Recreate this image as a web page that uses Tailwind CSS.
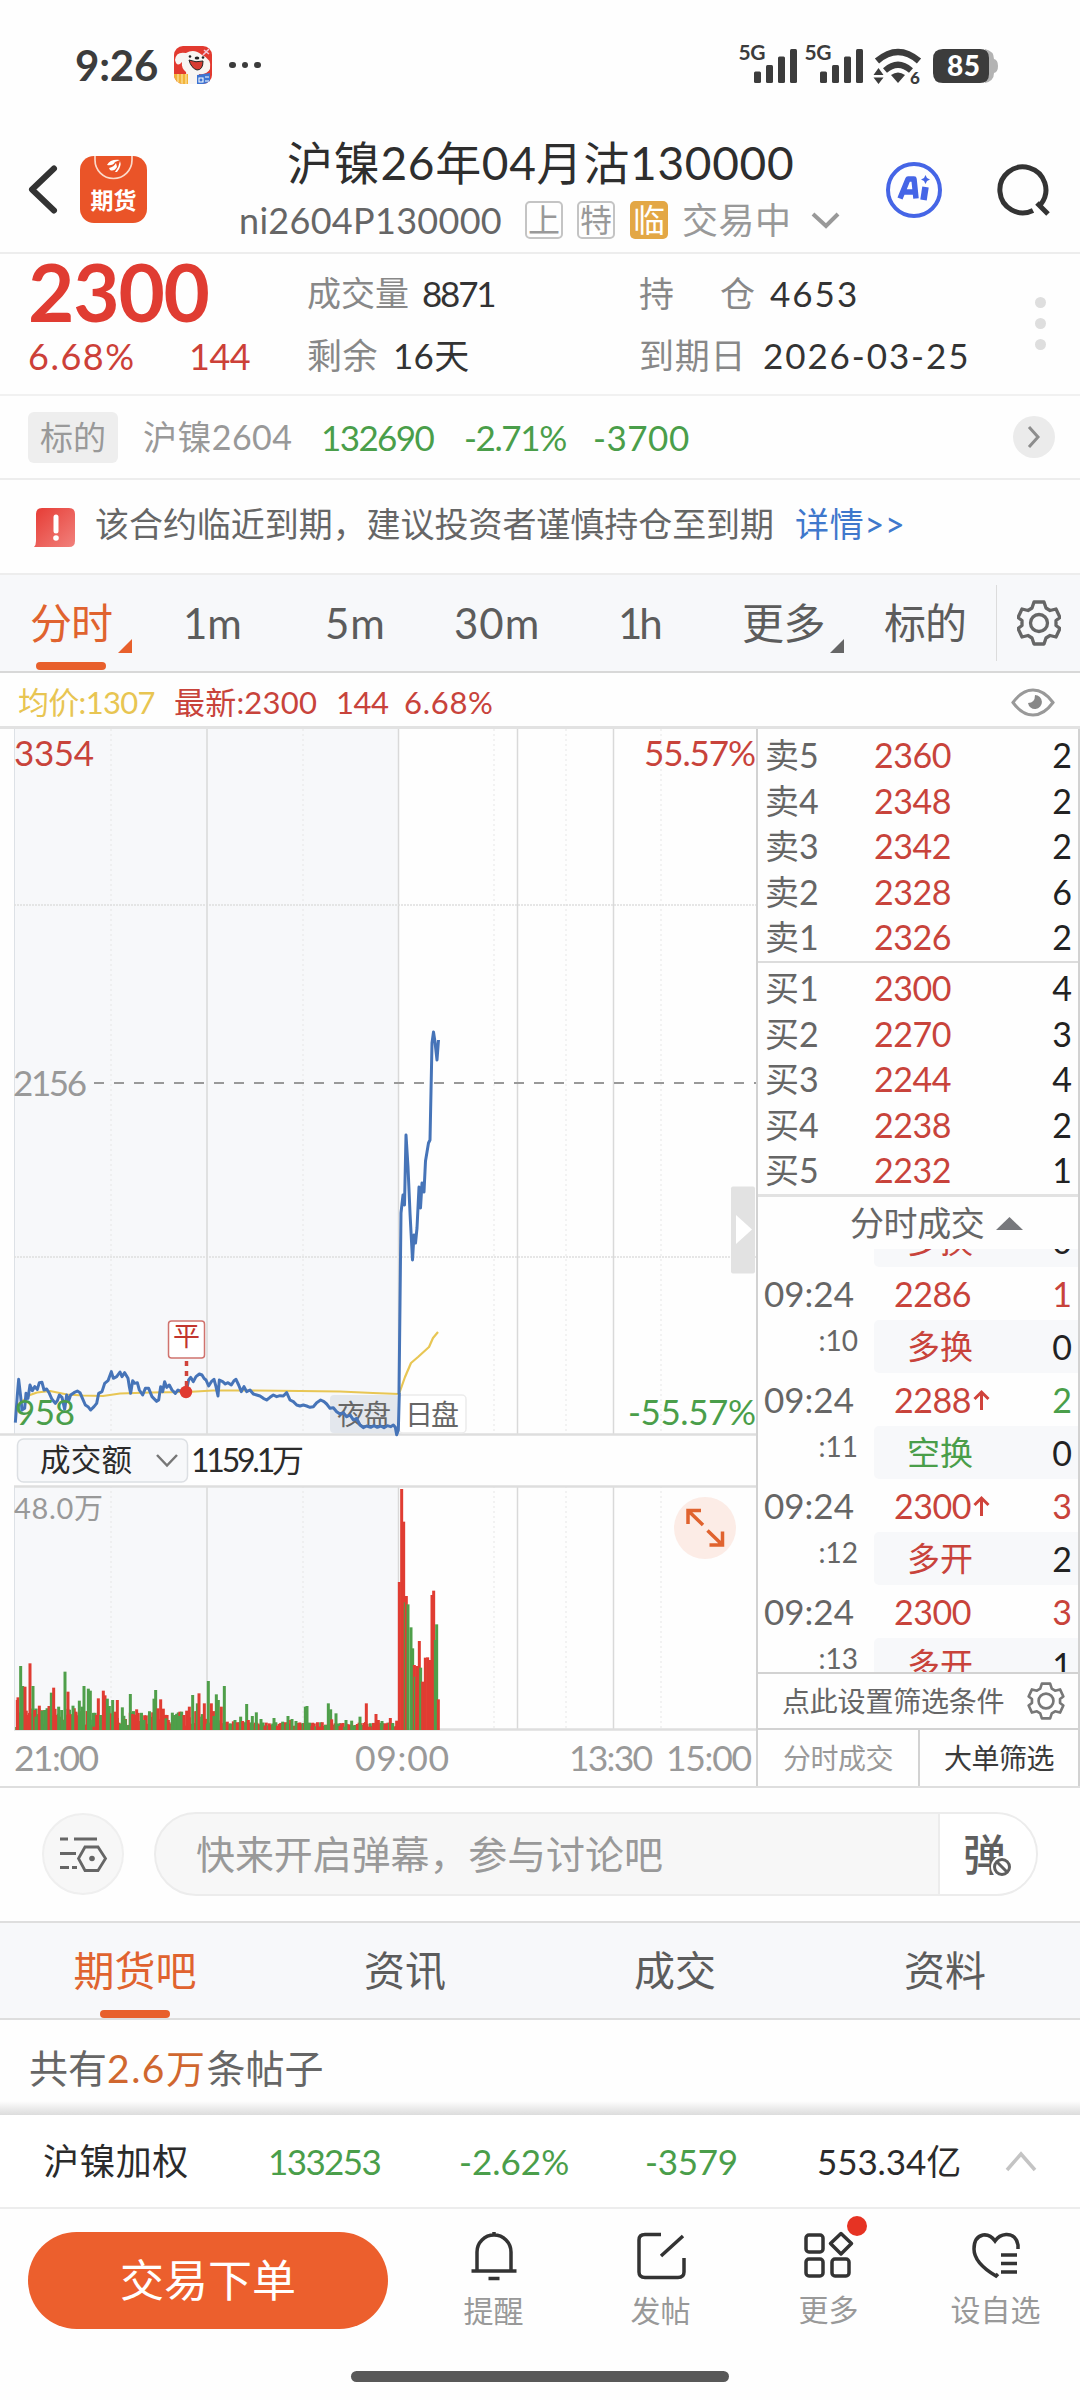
<!DOCTYPE html>
<html lang="zh-CN">
<head>
<meta charset="utf-8">
<title>沪镍26年04月沽130000</title>
<script src="https://cdn.jsdelivr.net/npm/@tailwindcss/browser@4"></script>
</head>
<body class="bg-white">
<div class="w-[1080px] h-[2400px] flex flex-col overflow-hidden bg-[#fefefe] font-[Lato,'Noto_Sans_CJK_SC',sans-serif] leading-none whitespace-nowrap text-[#333]">

  <!-- status bar -->
  <div class="h-[130px] shrink-0 flex items-center pl-[75px] pr-[80px]">
    <div class="w-[99px] text-[42px] font-bold tracking-[-0.200px] text-[#3c3c3c]">9:26</div>
    <svg class="w-[38px] h-[38px] shrink-0" viewBox="0 0 38 38">
      <clipPath id="mascot"><rect width="38" height="38" rx="9"/></clipPath>
      <g clip-path="url(#mascot)">
        <rect width="38" height="38" fill="#e23a30"/>
        <path d="M1 14Q2 5 12 7Q20 2 28 9Q38 13 36 23Q33 29 25 28L27 38H13L12 26Q7 22 8 16Q3 22 1 14Z" fill="#f8f5f3"/>
        <path d="M15 14Q22 17 29 15Q29 24 23 24Q17 22 15 14Z" fill="#d63c33" stroke="#222" stroke-width="1"/>
        <circle cx="16" cy="10.500" r="1.300" fill="#222"/><circle cx="29" cy="11.500" r="1.300" fill="#222"/><ellipse cx="23" cy="12" rx="2.300" ry="1.500" fill="#222"/>
        <path d="M29 9L35 3M30 4L35 8" stroke="#f1c5d6" stroke-width="1.600"/>
        <path d="M0 28H14V38H0Z" fill="#f2b43a"/><path d="M4 28V38M8 28V38M12 28V38" stroke="#fbdf9a" stroke-width="1.300"/>
        <path d="M23 29L36 27V38H23Z" fill="#3d74d3"/><path d="M25 32H29V36H25ZM31 31H35M31 35H35" stroke="#fff" stroke-width="1.100" fill="none"/>
      </g>
    </svg>
    <div class="flex gap-[6px] ml-[17px]"><i class="size-[6.5px] rounded-full bg-[#3c3c3c]"></i><i class="size-[6.5px] rounded-full bg-[#3c3c3c]"></i><i class="size-[6.5px] rounded-full bg-[#3c3c3c]"></i></div>
    <svg class="w-[262px] h-[56px] ml-auto" viewBox="738 36 262 56" fill="#3c3c3c">
      <g font-family="Lato" font-weight="700" font-size="21"><text x="738.500" y="59" textLength="27">5G</text><text x="804.500" y="59" textLength="27">5G</text></g>
      <g id="bars"><rect x="754" y="70.500" width="7" height="11.500" rx="1.500"/><rect x="766" y="64" width="7" height="18" rx="1.500"/><rect x="778" y="55.500" width="7" height="26.500" rx="1.500"/><rect x="790" y="48" width="7" height="34" rx="1.500"/></g>
      <use href="#bars" x="66"/>
      <path d="M877 60Q898 42 919 60" fill="none" stroke="#3c3c3c" stroke-width="6.500"/>
      <path d="M885 69.500Q898 58 911 69.500" fill="none" stroke="#3c3c3c" stroke-width="6"/>
      <path d="M891 74Q898 69 905 74L898 82Z"/>
      <path d="M873.500 74L878.500 67L883.500 74ZM873.500 76.500H883.500L878.500 83Z"/>
      <text x="910" y="83" font-family="Lato" font-weight="900" font-size="17">6</text>
      <path d="M985 48Q994 50 994 58Q998 59 998 65Q998 71 994 72Q994 80 985 82Z" fill="#b3b3b3"/>
      <path d="M943 48H980Q989 48 989 57V73Q989 82 980 82H943Q933 82 933 72V58Q933 48 943 48Z"/>
      <text x="947" y="75" font-family="Lato" font-weight="900" font-size="28" textLength="33" fill="#fff">85</text>
    </svg>
  </div>

  <!-- header -->
  <div class="h-[124px] shrink-0 border-b-2 border-[#ededed] flex">
    <svg class="w-[36px] h-[124px] ml-[25px] shrink-0" viewBox="25 130 36 124" fill="none" stroke="#333" stroke-width="6" stroke-linecap="round" stroke-linejoin="round"><path d="M54 168.500L32 189.500L54 210.500"/></svg>
    <div class="relative mt-[26px] ml-[19px] w-[67px] h-[67px] rounded-[14px] bg-[#ea5428] overflow-hidden shrink-0">
      <svg class="absolute inset-0 w-full h-full" viewBox="0 0 67 67"><path d="M15 0V4A18 18 0 0 0 52 4V0" fill="none" stroke="#fbd9c9" stroke-width="1.700"/><path d="M40 4Q30 3 27 9Q33 10 35 6ZM29 12Q34 11 36 7L37 11Q34 16 30 14ZM35 16Q39 11 40 5Q42 10 37 16Z" fill="#fff"/></svg>
      <div class="pt-[33px] text-center text-[23px] font-bold text-white">期货</div>
    </div>
    <div class="w-[653px] ml-[37px] flex flex-col items-start">
      <div class="h-[66px] pl-[103px] flex items-center text-[46px] tracking-[0.700px] text-[#2e2e2e]">沪镍26年04月沽130000</div>
      <div class="h-[48px] pl-[55px] flex items-center text-[36px]">
        <span class="w-[286px] text-[#666] tracking-[0.300px]">ni2604P130000</span>
        <span class="size-[38px] mr-[14px] border-2 border-[#c4c4c4] rounded-[5px] flex items-center justify-center text-[32px] text-[#999]">上</span>
        <span class="size-[38px] mr-[15px] border-2 border-[#c4c4c4] rounded-[5px] flex items-center justify-center text-[32px] text-[#999]">特</span>
        <span class="size-[38px] mr-[14px] bg-[#e3a745] rounded-[5px] flex items-center justify-center text-[32px] text-white">临</span>
        <span class="w-[128px] text-[#999] tracking-[0.500px]">交易中</span>
        <svg class="w-[32px] h-[20px]" viewBox="0 0 32 20" fill="none" stroke="#999" stroke-width="4"><path d="M3 4L16 16L28 4"/></svg>
      </div>
    </div>
    <svg class="w-[200px] h-[124px] ml-[47px] shrink-0" viewBox="884 130 200 124" fill="none">
      <circle cx="914" cy="190" r="26" stroke="#4565e6" stroke-width="4"/>
      <path d="M900 198.500L908 179H914L916 198.500M904.500 192H914" stroke="#4565e6" stroke-width="5.500" stroke-linejoin="round"/><path d="M925.500 187L923.500 200" stroke="#4565e6" stroke-width="6.500"/><path d="M925.500 175L927 178L930 179.500L927 181L925.500 184L924 181L921 179.500L924 178Z" fill="#4565e6"/>
      <path d="M1033 210.500A23 23 0 1 1 1041 204M1037 203L1048 214" stroke="#333" stroke-width="5"/>
    </svg>
  </div>

  <!-- quote -->
  <div class="h-[142px] shrink-0 border-b-2 border-[#f1f1f1] flex text-[35px]">
    <div class="w-[279px] pl-[28px] shrink-0">
      <div class="h-[73px] flex items-center text-[80px] font-bold tracking-[-1.200px] text-[#e03c32]">2300</div>
      <div class="h-[57px] flex items-center text-[36px] text-[#cc4038]"><span class="w-[161px] tracking-[1.500px]">6.68%</span><span class="tracking-[-0.500px]">144</span></div>
    </div>
    <div class="w-[333px] pl-[28px] pt-[9px] shrink-0">
      <div class="h-[60px] flex items-center"><span class="w-[115px] text-[34px] text-[#888]">成交量</span><span class="tracking-[-2.200px]">8871</span></div>
      <div class="h-[64px] flex items-center"><span class="w-[86px] text-[#888] tracking-[0.500px]">剩余</span><span class="tracking-[0.300px]">16天</span></div>
    </div>
    <div class="w-[400px] pl-[27px] pt-[9px] shrink-0">
      <div class="h-[60px] flex items-center"><span class="w-[81px] text-[#888]">持</span><span class="w-[50px] text-[#888]">仓</span><span class="tracking-[2px]">4653</span></div>
      <div class="h-[64px] flex items-center"><span class="w-[124px] text-[#888] tracking-[0.800px]">到期日</span><span class="tracking-[1.900px]">2026-03-25</span></div>
    </div>
    <div class="flex flex-col gap-[10px] pt-[43px] pl-[23px]"><i class="size-[11px] rounded-full bg-[#dedede]"></i><i class="size-[11px] rounded-full bg-[#dedede]"></i><i class="size-[11px] rounded-full bg-[#dedede]"></i></div>
  </div>

  <!-- underlying -->
  <div class="h-[84px] shrink-0 border-b-2 border-[#ededed] flex items-center pl-[28px] pr-[25px] text-[35px] text-[#4a9e4a]">
    <span class="w-[90px] h-[51px] mr-[25px] rounded-[6px] bg-[#eee] flex items-center justify-center text-[33px] text-[#999]">标的</span>
    <span class="w-[178px] text-[34px] tracking-[0.400px] text-[#999]">沪镍2604</span>
    <span class="w-[143px] tracking-[-1.600px]">132690</span>
    <span class="w-[129px] tracking-[-1.400px]">-2.71%</span>
    <span class="tracking-[0.500px]">-3700</span>
    <span class="ml-auto size-[42px] rounded-full bg-[#ebebeb] flex items-center justify-center"><svg class="w-[14px] h-[24px]" viewBox="0 0 14 24" fill="none" stroke="#8d8d8d" stroke-width="3"><path d="M2 2L11 12L2 22"/></svg></span>
  </div>

  <!-- notice -->
  <div class="h-[95px] shrink-0 border-b-2 border-[#ededed] flex items-center pb-[5px] pl-[34px] text-[34px] text-[#666]">
    <svg class="w-[41px] h-[39px] mr-[20px] mt-[6px]" viewBox="0 0 41 39"><defs><linearGradient id="al" x1="0" y1="0" x2="1" y2="1"><stop stop-color="#e63b34"/><stop offset="1" stop-color="#f1817c"/></linearGradient></defs><path d="M8 0H35Q41 0 41 6V33Q41 39 35 39H0Q2 37 2 33V6Q2 0 8 0Z" fill="url(#al)"/><path d="M22 9V23" stroke="#fff" stroke-width="5" stroke-linecap="round"/><circle cx="22" cy="30" r="2.800" fill="#fff"/></svg>
    <span class="w-[700px] tracking-[-0.050px]">该合约临近到期，建议投资者谨慎持仓至到期</span>
    <span class="text-[#3f78cc] tracking-[0.800px]">详情&gt;&gt;</span>
  </div>

  <!-- period tabs -->
  <div class="relative h-[98px] shrink-0 bg-[#f7f8fa] border-b-2 border-[#d8d8d8] flex items-center text-[42px] text-[#5c5c5c]">
    <span class="w-[183px] pl-[30px] text-[#e0632f] tracking-[-1px]">分时</span>
    <span class="w-[142px]">1m</span>
    <span class="w-[129px] tracking-[1px]">5m</span>
    <span class="w-[164px] tracking-[1px]">30m</span>
    <span class="w-[124px] tracking-[-3px]">1h</span>
    <span class="w-[142px] tracking-[-0.500px]">更多</span>
    <span class="w-[112px] tracking-[-1px]">标的</span>
    <span class="w-px h-[76px] bg-[#dcdcdc] mr-[20px]"></span>
    <svg class="w-[44px] h-[46px]" viewBox="-22 -23 44 46" fill="none" stroke="#666" stroke-width="3.300" stroke-linejoin="round"><path id="gear" d="M-5 -21H5L7 -15L11 -12.500L17 -14L21 -5.500L17 -2.500V2.500L21 5.500L17 14L11 12.500L7 15L5 21H-5L-7 15L-11 12.500L-17 14L-21 5.500L-17 2.500V-2.500L-21 -5.500L-17 -14L-11 -12.500L-7 -15Z"/><circle r="8.500"/></svg>
    <i class="absolute left-[36px] top-[87px] w-[70px] h-[8px] rounded-full bg-[#e8602c]"></i>
    <svg class="absolute left-[118px] top-[64px] w-[14px] h-[14px]" viewBox="0 0 14 14"><path d="M14 0V14H0Z" fill="#e8602c"/></svg>
    <svg class="absolute left-[830px] top-[64px] w-[14px] h-[14px]" viewBox="0 0 14 14"><path d="M14 0V14H0Z" fill="#666"/></svg>
  </div>

  <!-- legend -->
  <div class="h-[56px] shrink-0 border-b-3 border-[#e2e2e2] flex items-center pt-[5px] pl-[18px] pr-[25px] text-[31px] text-[#c8433b]">
    <span class="w-[156px] text-[#e8c552] tracking-[-0.700px]">均价:1307</span>
    <span class="w-[162px] tracking-[0.200px]">最新:2300</span>
    <span class="w-[68px] tracking-[-0.500px]">144</span>
    <span class="tracking-[0.700px]">6.68%</span>
    <svg class="w-[44px] h-[29px] ml-auto" viewBox="0 0 44 29" fill="none" stroke="#999" stroke-width="3"><path d="M2 14.500Q11 2 22 2T42 14.500Q33 27 22 27T2 14.500Z"/><path d="M24 7A7 7 0 1 1 17 15Q24 15 24 7Z" fill="#888" stroke="none"/></svg>
  </div>

  <!-- chart + order book -->
  <div class="h-[1059px] shrink-0 border-b-2 border-[#dedede] flex">
    <svg class="w-[756px] h-[1057px] shrink-0" viewBox="0 729 756 1057" font-family="Lato,'Noto Sans CJK SC',sans-serif" font-size="35">
      <rect x="14" y="729" width="385" height="705" fill="#f7f8fa"/>
      <rect x="14" y="1486" width="385" height="243" fill="#f7f8fa"/>
      <path d="M14.500 729V1434M14.500 1486V1729" stroke="#dde1e6" stroke-width="1"/>
      <path d="M207 729V1434M398.500 729V1434M517.500 729V1434M613.500 729V1434M207 1486V1729M398.500 1486V1729M517.500 1486V1729M613.500 1486V1729" stroke="#d9d9d9" stroke-width="1.500"/>
      <path d="M111 729V1434M303 729V1434M494 729V1434M566 729V1434M661 729V1434M111 1486V1729M303 1486V1729M494 1486V1729M566 1486V1729M661 1486V1729" stroke="#e6e6e6" stroke-width="1" stroke-dasharray="2 3"/>
      <path d="M14 905H757M14 1257H757" stroke="#dedede" stroke-width="1.500" stroke-dasharray="2 1"/>
      <path d="M0 1434.500H757M14 1486.500H757M14 1729.500H757" stroke="#dedede" stroke-width="2.500"/>
      <path d="M94 1083H757" stroke="#999" stroke-width="2" stroke-dasharray="10 10"/>
      <rect x="731" y="1186.500" width="24" height="87" rx="2" fill="#e2e2e2"/><path d="M736 1215L752 1229.500L736 1244Z" fill="#fff"/>
      <rect x="330" y="1395" width="69" height="38" rx="4" fill="#e3e7ed"/><rect x="399" y="1395" width="67" height="38" rx="4" fill="#fff" stroke="#ececec" stroke-width="1.500"/>
      <g font-size="28" fill="#666"><text x="337" y="1425" textLength="54">夜盘</text><text x="405" y="1425" textLength="54">日盘</text></g>
      <g fill="none" stroke-linejoin="round">
        <path d="M20 1403L25 1399L30 1395L37 1392.500L50 1391L67 1394.500L83 1395.500L103 1396L120 1393.500L150 1392.500L187 1392L213 1390.500L253 1390.500L300 1391L340 1391.500L373 1393L399 1394L405 1377L411 1363L418 1357L429 1347L433 1338L438 1332" stroke="#e8c654" stroke-width="2.200"/>
        <path transform="translate(0 1340) scale(.33333)" stroke="#4674b8" stroke-width="9" d="M46 248L52 165L56 118L62 170L66 210L74 205L78 160L84 175L90 135L97 152L104 140L112 148L118 128L126 127L132 150L140 147L148 160L156 178L166 190L172 182L178 165L186 172L194 208L200 165L206 182L212 165L222 158L232 153L240 158L246 172L256 195L264 200L272 210L282 200L290 190L296 160L306 155L314 130L324 122L334 95L340 115L350 110L360 96L366 110L374 98L384 115L388 140L392 160L398 122L404 130L412 128L418 150L428 165L436 145L446 145L456 170L470 184L476 180L482 140L488 155L494 125L500 142L508 135L516 150L526 160L534 150L544 155L552 148L558 157L566 120L572 112L580 125L588 110L598 102L606 105L612 115L618 120L626 138L634 125L642 118L648 140L654 168L658 120L668 125L676 132L684 128L694 135L702 122L708 118L716 135L724 155L732 140L740 155L750 150L760 162L770 165L780 168L790 175L800 180L810 172L820 165L830 170L840 167L850 168L860 158L870 180L880 185L890 195L900 198L910 195L920 198L930 202L940 200L950 188L962 180L972 185L980 192L990 205L1000 203L1010 215L1020 222L1030 218L1040 230L1050 225L1060 240L1070 235L1080 255L1090 263L1100 258L1112 262L1122 257L1132 262L1142 258L1152 263L1162 257L1172 260L1180 255L1186 262L1190 284L1195 270L1198 160"/>
        <path d="M399 1394L401 1213L403 1195L404.500 1205L406 1135L408 1167L410 1213L412.500 1260L414 1235L415.500 1243L417 1228L419 1187L420.500 1208L422 1183L424 1192L425.500 1161L428.500 1143L430 1140L432 1043L433.500 1032L435 1042L437 1060L438.500 1040" stroke="#4674b8" stroke-width="3"/>
      </g>
      <path d="M186.500 1361V1390" stroke="#d0433b" stroke-width="3.500" stroke-dasharray="5 5"/><circle cx="186" cy="1392" r="6.200" fill="#e03a30"/>
      <rect x="168.500" y="1321" width="36" height="37" rx="3" fill="#fff" stroke="#d0736e" stroke-width="1.500"/><text x="173" y="1346" font-size="27" fill="#c2352e">平</text>
      <text x="14" y="765.500" textLength="80" fill="#c8433b">3354</text><text x="644" y="765.500" textLength="112" fill="#c8433b">55.57%</text>
      <text x="13" y="1095.500" textLength="74" fill="#999">2156</text>
      <text x="15" y="1425" textLength="60" fill="#4a9e4a">958</text><text x="628" y="1425" textLength="128" fill="#4a9e4a">-55.57%</text>
      <rect x="17.500" y="1439" width="170" height="43" rx="6" fill="#f7f8fa" stroke="#dcdfe3" stroke-width="1.500"/>
      <text x="40" y="1471" font-size="30.500" textLength="92" fill="#2b2b2b">成交额</text><path d="M157 1455L167 1465.500L177 1455" fill="none" stroke="#777" stroke-width="2.500"/>
      <text x="191" y="1472" font-size="32" textLength="113" fill="#2b2b2b">1159.1万</text>
      <text x="14" y="1518.500" font-size="29" textLength="89" fill="#999">48.0万</text>
      <g id="volume"></g>
      <circle cx="705" cy="1528" r="31" fill="#fcece6"/><path d="M703 1525L688.500 1511M688 1524V1510.500H701M707.500 1530.500L722 1544.500M722.500 1531.500V1545H709.500" stroke="#e0632f" stroke-width="3.500" fill="none"/>
      <g fill="#999" font-size="35.500"><text x="14" y="1771" textLength="85">21:00</text><text x="355" y="1771" textLength="94">09:00</text><text x="569" y="1771" textLength="84">13:30</text><text x="666" y="1771" textLength="86">15:00</text></g>
    </svg>

    <div class="w-[324px] shrink-0 border-x-2 border-[#d2d2d2] flex flex-col text-[34px]">
      <div id="asks" class="h-[234px] shrink-0 border-b-2 border-[#dcdcdc] pt-[4px]"></div>
      <div id="bids" class="h-[234px] shrink-0 border-b-3 border-[#e2e2e2] pt-[3px]"></div>
      <div class="h-[52px] shrink-0 pl-[92px] flex items-center text-[#666]"><span class="w-[146px] tracking-[-0.400px]">分时成交</span><svg class="w-[27px] h-[13px]" viewBox="0 0 27 13"><path d="M13.500 0L27 13H0Z" fill="#77787c"/></svg></div>
      <div class="h-[425px] shrink-0 border-b-2 border-[#d2d2d2] overflow-hidden flex flex-col justify-start"><div id="ticks" class="-mt-[35px]"></div></div>
      <div class="h-[56px] shrink-0 border-b-2 border-[#d2d2d2] flex items-center pl-[24px] text-[28px] text-[#666]"><span class="w-[245px] tracking-[-0.200px]">点此设置筛选条件</span><svg class="w-[38px] h-[38px]" viewBox="-23 -23 46 46" fill="none" stroke="#777" stroke-width="3.200" stroke-linejoin="round"><use href="#gear"/><circle r="9"/></svg></div>
      <div class="flex-1 flex text-[28px] text-center"><span class="w-[162px] border-r-2 border-[#d2d2d2] flex items-center justify-center text-[#999] tracking-[-0.500px]">分时成交</span><span class="flex-1 flex items-center justify-center text-[#3a3a3a] tracking-[-0.500px]">大单筛选</span></div>
    </div>
  </div>

  <!-- barrage input -->
  <div class="h-[135px] shrink-0 border-b-2 border-[#dedede] flex items-center pb-px pl-[42px]">
    <span class="size-[82px] mr-[30px] rounded-full border-2 border-[#efefef] bg-[#f7f7f7] flex items-center justify-center"><svg class="w-[50px] h-[40px]" viewBox="0 0 50 40" fill="none" stroke="#666" stroke-width="3"><path d="M2 5H10M16 5H39M2 19.500H18M2 33.500H11M14 33.500H19"/><path d="M27 13H40L47.500 24.500L40 36.500H27L20.500 24.500Z" stroke-width="2.800"/><circle cx="34" cy="24.500" r="2.800" fill="#666" stroke="none"/></svg></span>
    <div class="w-[884px] h-[84px] rounded-full border-2 border-[#ececec] bg-[#f7f7f7] overflow-hidden flex">
      <span class="w-[782px] pl-[40px] flex items-center text-[39px] tracking-[-0.100px] text-[#999]">快来开启弹幕，参与讨论吧</span>
      <span class="relative flex-1 border-l-2 border-[#ececec] bg-white flex items-center pl-[23px] text-[43px] font-medium text-[#5f5f5f]">弹<svg class="absolute left-[50px] top-[41px] w-[24px] h-[24px]" viewBox="0 0 24 24"><circle cx="12" cy="12" r="11" fill="#fff"/><circle cx="12" cy="12" r="7.500" fill="none" stroke="#5f5f5f" stroke-width="3"/><path d="M7 7L17 17" stroke="#5f5f5f" stroke-width="3"/></svg></span>
    </div>
  </div>

  <!-- content tabs -->
  <div class="relative h-[97px] shrink-0 bg-[#f7f8fa] border-b-2 border-[#dedede] grid grid-cols-4 items-center text-center text-[41px] text-[#5c5c5c]">
    <span class="text-[#e0632f]">期货吧</span><span>资讯</span><span>成交</span><span>资料</span>
    <i class="absolute left-[100px] bottom-0 w-[70px] h-[8px] rounded-full bg-[#e8602c]"></i>
  </div>
  <div class="h-[95px] shrink-0 flex flex-col justify-between text-[39px] text-[#666]">
    <div class="pl-[29px] pt-[29px]">共有<span class="text-[#d0672f] tracking-[1.500px]">2.6万</span>条帖子</div>
    <div class="h-[14px] bg-linear-to-b from-[#fefefe] to-[#dcdcdc]"></div>
  </div>

  <!-- index strip -->
  <div class="h-[94px] shrink-0 bg-white border-b-2 border-[#ededed] flex items-center pl-[43px] text-[35px] text-[#4a9e4a]">
    <span class="w-[225px] text-[36px] tracking-[0.400px] text-[#2b2b2b]">沪镍加权</span>
    <span class="w-[191px] tracking-[-1.600px]">133253</span>
    <span class="w-[186px]">-2.62%</span>
    <span class="w-[172px] tracking-[-0.300px]">-3579</span>
    <span class="w-[187px] tracking-[-0.100px] text-[#2b2b2b]">553.34亿</span>
    <svg class="w-[34px] h-[22px]" viewBox="0 0 34 22" fill="none" stroke="#c4c4c4" stroke-width="3.500"><path d="M3 20L17 4L31 20"/></svg>
  </div>

  <!-- actions -->
  <div class="h-[120px] shrink-0 flex pt-[23px] pl-[28px]">
    <div class="w-[360px] h-[97px] rounded-full bg-[#ec5f2d] flex items-center justify-center text-[44px] text-white shrink-0 pb-[2px]">交易下单</div>
    <div class="ml-[22px] w-[668px] grid grid-cols-4 text-center text-[30px] text-[#999]">
      <div class="flex flex-col items-center"><svg class="w-[56px] h-[64px] -mt-[5px]" viewBox="-28 -4 56 64" fill="none" stroke="#333" stroke-width="3.500"><path d="M0 1V5M-17 39V21A17 17 0 0 1 17 21V39M-22.500 40H22.500M-5.500 47.500H5.500"/></svg><span class="mt-[4px]">提醒</span></div>
      <div class="flex flex-col items-center"><svg class="w-[56px] h-[64px] -mt-[5px]" viewBox="-28 -4 56 64" fill="none" stroke="#333" stroke-width="3.500"><path d="M0 3.500H-16Q-22 3.500 -22 9V41Q-22 46.500 -16 46.500H17Q23 46.500 23 41V27M22 5L0 25"/></svg><span class="mt-[4px]">发帖</span></div>
      <div class="relative flex flex-col items-center"><svg class="w-[56px] h-[64px] -mt-[5px] ml-[2px]" viewBox="-28 -4 56 64" fill="none" stroke="#333" stroke-width="3.500"><rect x="-23" y="4" width="17" height="17" rx="3"/><rect x="-23" y="28" width="17" height="17" rx="3"/><rect x="3" y="28" width="17" height="17" rx="3"/><path d="M12 2.500L22.500 12.500L12 23L1.500 12.500Z" stroke-linejoin="round"/></svg><span class="mt-[3px] ml-[2px]">更多</span><i class="absolute left-[103px] -top-[16px] size-[20px] rounded-full bg-[#e63323]"></i></div>
      <div class="flex flex-col items-center"><svg class="w-[56px] h-[64px] -mt-[5px] ml-[2px]" viewBox="-28 -4 56 64" fill="none" stroke="#333" stroke-width="3.500"><path d="M22 18V14Q20 3 10 3.500Q3 4 -1 10Q-6 3 -13 4Q-22 6 -22 18Q-22 32 0 45L2 43M5 24H21M5 32.500H21M5 41H21"/></svg><span class="mt-[3px] ml-[2px]">设自选</span></div>
    </div>
  </div>
  <div class="flex-1 flex justify-center pt-[42px]"><i class="w-[378px] h-[11px] rounded-full bg-[#585858]"></i></div>
</div>

<script>
const RED = 'text-[#c8433b]', GREEN = 'text-[#4a9e4a]', INK = 'text-[#222]';
const book = (id, name, rows) => {
  document.getElementById(id).innerHTML = rows.map(([n, price, qty]) =>
    `<div class="h-[45.5px] flex items-center pb-px pl-[7px] pr-[6px]"><span class="w-[80px] text-[#666]">${name}${n}</span><span class="w-[106px] text-right ${RED} tracking-[-0.5px]">${price}</span><span class="flex-1 text-right ${INK}">${qty}</span></div>`).join('');
};
book('asks', '卖', [[5,2360,2],[4,2348,2],[3,2342,2],[2,2328,6],[1,2326,2]]);
book('bids', '买', [[1,2300,4],[2,2270,3],[3,2244,4],[4,2238,2],[5,2232,1]]);

const ticks = [
  ['','',0,RED,'多换',0,RED,''],
  ['2286','',1,RED,'多换',0,RED,':10'],
  ['2288','↑',2,GREEN,'空换',0,GREEN,':11'],
  ['2300','↑',3,RED,'多开',2,RED,':12'],
  ['2300','',3,RED,'多开',1,RED,':13'],
];
const up = '<svg class="w-[17px] h-[21px] ml-[2px]" viewBox="0 0 17 21" fill="none" stroke="#d0433b" stroke-width="3"><path d="M8.500 21V3M1.500 10L8.500 3L15.500 10"/></svg>';
document.getElementById('ticks').innerHTML = ticks.map(([p, arrow, q, qc, kind, oi, kc, sec], i) => {
  const head = i === 0 ? '' : `<div class="h-[53px] flex items-center pl-[6px] pr-[6px]"><span class="w-[130px] text-[#666] text-[35px]">09:24</span><span class="${RED} tracking-[-0.5px]">${p}</span>${arrow ? up : ''}<span class="flex-1 text-right ${qc}">${q}</span></div>`;
  return head + `<div class="h-[53px] flex"><span class="w-[100px] pt-[6px] text-right text-[28px] text-[#666]">${sec}</span><span class="ml-[16px] flex-1 bg-[#f7f8fa] rounded-l-[5px] flex items-center pl-[33px] pr-[6px]"><span class="${kc} text-[33px]">${kind}</span><span class="flex-1 text-right ${INK}">${oi}</span></span></div>`;
}).join('');

// Turnover bars: x and top in thirds of a pixel, measured from (0, 1340)
const up3 = '52,1080 54,1072 75,1040 90,970 83,1125 104,1110 118,1097 147,1098 161,1043 170,1125 204,1055 210,1122 228,1115 260,1155 282,1160 295,1075 310,1052 315,1066 334,1120 352,1080 346,1115 398,1122 410,1108 405,1135 416,1143 482,1078 474,1105 490,1106 505,1140 552,1125 560,1112 568,1100 588,1115 597,1060 613,1090 634,1090 664,1100 682,1145 700,1144 712,1147 728,1143 745,1140 795,1158 808,1150 833,1157 872,1140 898,1155 936,1158 958,1160 995,1138 1020,1158 1072,1152 1099,1090 1110,1160 1128,1122 1135,1140 1155,1160 1171,1134 1190,1142 1198,726 1205,447 1211,545 1219,768 1243,975 1250,978 1258,903 1268,1025 1276,953 1283,952 1290,960 1296,765 1301,752 1315,1078';
const down3 = '62,978 68,1038 99,1038 108,1130 126,1112 134,1110 154,1058 176,1100 185,1110 195,995 219,1097 238,1082 252,1038 246,1100 265,1046 271,1052 302,1125 322,1076 328,1098 338,1080 367,1102 376,1138 391,1062 424,1124 432,1140 448,1124 462,1076 467,1050 498,1135 517,1118 524,1125 536,1128 545,1115 578,1065 592,1090 605,1130 625,1023 642,1128 649,1063 655,1080 673,1038 690,1150 705,1140 722,1130 740,1092 757,1128 769,1117 783,1137 822,1134 848,1145 864,1128 876,1137 888,1143 916,1100 921,1098 976,1155 985,1090 992,1108 1008,1120 1038,1140 1055,1142 1066,1155 1080,1130 1146,1143 1178,1150 1216,787 1224,793 1233,862 1238,925 1246,1010 1262,983 1306,900 1310,853';
const parse = (s, c) => s.split(' ').map(p => [...p.split(',').map(Number), c]);
const bars = [...parse(up3, '#e03c32'), ...parse(down3, '#4f9f4a')].sort((a, b) => a[0] - b[0]);
let seed = 7;
const rnd = () => (seed = (seed * 16807) % 2147483647) / 2147483647;
const filler = [];
for (let x = 50; x < 1195; x += 4.8) {
  const tall = x < 250 ? 60 : x < 660 ? 48 : 15;
  filler.push([x, 1161 - rnd() * tall, rnd() < (x < 660 ? 0.5 : 0.62) ? '#e03c32' : '#4f9f4a']);
}
document.getElementById('volume').innerHTML = [...filler, ...bars].map(([x, y, c]) =>
  `<rect x="${(x - 4.5) / 3}" y="${1340 + y / 3}" width="3" height="${(1170 - y) / 3}" fill="${c}"/>`).join('');
</script>
</body>
</html>
